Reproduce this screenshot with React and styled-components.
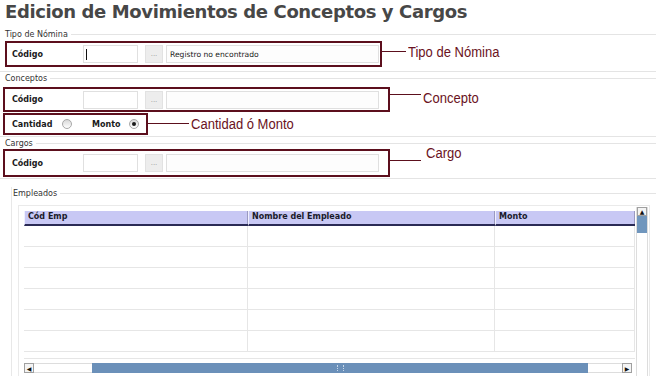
import styled, { createGlobalStyle } from "styled-components"

const Global = createGlobalStyle`
  body {
    margin: 0;
    background: #fff;
    font-family: "DejaVu Sans", Verdana, sans-serif;
    color: #222;
  }
`

const ROWS = 6

export default function App() {
    return (
        <Page>
            <Global />
            <Title>Edicion de Movimientos de Conceptos y Cargos</Title>

            <Section $pad={4}>
                <Legend><span>Tipo de Nómina</span></Legend>
                <Callout>
                    <Box $x={5} $w={377} $h={26} $top={1}>
                        <FieldRow>
                            <Label>Código</Label>
                            <CodeInput><Caret /></CodeInput>
                            <Dots>...</Dots>
                            <DescInput>Registro no encontrado</DescInput>
                        </FieldRow>
                    </Box>
                    <Leader $w={24} $lift={2} />
                    <Note $lift={2}>Tipo de Nómina</Note>
                </Callout>
            </Section>

            <Section $pad={1}>
                <Legend><span>Conceptos</span></Legend>
                <Callout>
                    <Box $x={3} $w={387} $h={25} $top={3}>
                        <FieldRow>
                            <Label>Código</Label>
                            <CodeInput />
                            <Dots>...</Dots>
                            <DescInput />
                        </FieldRow>
                    </Box>
                    <Leader $w={31} $lift={4} />
                    <Note $lift={0}>Concepto</Note>
                </Callout>
                <Callout>
                    <Box $x={3} $w={145} $h={22} $top={1}>
                        <FieldRow>
                            <RadioLabel>Cantidad</RadioLabel>
                            <Radio />
                            <RadioLabel $w={37}>Monto</RadioLabel>
                            <Radio $checked />
                        </FieldRow>
                    </Box>
                    <Leader $w={41} $lift={0} />
                    <Note $lift={0}>Cantidad ó Monto</Note>
                </Callout>
            </Section>

            <Section $pad={1}>
                <Legend><span>Cargos</span></Legend>
                <Callout>
                    <Box $x={3} $w={387} $h={28} $top={0}>
                        <FieldRow>
                            <Label>Código</Label>
                            <CodeInput />
                            <Dots>...</Dots>
                            <DescInput />
                        </FieldRow>
                    </Box>
                    <Leader $w={31} $lift={3} />
                    <Note $lift={10} $gap={5}>Cargo</Note>
                </Callout>
            </Section>

            <Empleados>
                <Legend $indent={-4}><span>Empleados</span></Legend>
                <Panel>
                    <GridWrap>
                        <Grid>
                            <HeadCell>Cód Emp</HeadCell>
                            <HeadCell>Nombre del Empleado</HeadCell>
                            <HeadCell>Monto</HeadCell>
                            {Array.from({ length: ROWS * 3 }).map((_, i) => (
                                <Cell key={i} />
                            ))}
                        </Grid>
                        <HScroll>
                            <Arrow>◀</Arrow>
                            <Track $w={58} />
                            <Thumb><Grip /></Thumb>
                            <Track $w={34} />
                            <Arrow>▶</Arrow>
                        </HScroll>
                    </GridWrap>
                    <VScroll>
                        <Arrow $v>▲</Arrow>
                        <VThumb />
                    </VScroll>
                </Panel>
            </Empleados>
        </Page>
    )
}

const Page = styled.div`
  width: 664px;
  height: 376px;
  overflow: hidden;
`
const Title = styled.h1`
  margin: 0;
  padding: 1px 0 0 5px;
  height: 27px;
  font-size: 18px;
  line-height: 22px;
  font-weight: bold;
  color: #474747;
  letter-spacing: -0.38px;
`
const Section = styled.div`
  width: 656px;
  padding-bottom: ${p => p.$pad}px;
  border-bottom: 1px solid #e4e4e4;
`
const Legend = styled.div`
  display: flex;
  align-items: center;
  height: 12px;
  padding-left: ${p => 5 + (p.$indent || 0)}px;
  font-size: 8px;
  color: #333;

  &::after {
    content: "";
    flex: 1;
    border-top: 1px solid #e4e4e4;
    margin: 1px 0 0 3px;
  }
`
const Callout = styled.div`
  display: flex;
  align-items: center;
`
const Box = styled.div`
  box-sizing: border-box;
  margin: ${p => p.$top}px 0 0 ${p => p.$x}px;
  width: ${p => p.$w}px;
  height: ${p => p.$h}px;
  padding-left: ${p => 10 - p.$x}px;
  border: 2px solid #5c0f1d;
  display: flex;
  align-items: center;
`
const Leader = styled.div`
  width: ${p => p.$w}px;
  border-top: 1px solid #5c0f1d;
  margin-bottom: ${p => p.$lift}px;
  margin-top: ${p => -p.$lift}px;
`
const Note = styled.span`
  margin-left: ${p => p.$gap ?? 2}px;
  margin-bottom: ${p => p.$lift}px;
  margin-top: ${p => -p.$lift}px;
  font-family: "Liberation Sans", Arial, sans-serif;
  font-size: 14px;
  color: #6a1222;
  display: inline-block;
  transform: scaleX(0.93);
  transform-origin: left center;
  white-space: nowrap;
`
const FieldRow = styled.div`
  display: flex;
  align-items: center;
`
const Label = styled.span`
  width: 71px;
  font-size: 8px;
  font-weight: bold;
  color: #1a1a1a;
`
const CodeInput = styled.div`
  box-sizing: border-box;
  width: 55px;
  height: 18px;
  border: 1px solid #e0e0e0;
  background: #fff;
  display: flex;
  align-items: center;
  padding-left: 2px;
`
const Caret = styled.span`
  width: 1px;
  height: 11px;
  background: #111;
`
const Dots = styled.div`
  box-sizing: border-box;
  width: 18px;
  height: 18px;
  margin-left: 7px;
  background: #ededed;
  border: 1px solid #e2e2e2;
  color: #999;
  font-size: 7px;
  display: flex;
  align-items: center;
  justify-content: center;
`
const DescInput = styled.div`
  box-sizing: border-box;
  width: 213px;
  height: 18px;
  margin-left: 3px;
  border: 1px solid #e0e0e0;
  background: #fdfdfd;
  font-size: 7.6px;
  color: #222;
  display: flex;
  align-items: center;
  padding-left: 3px;
`
const RadioLabel = styled.span`
  width: ${p => p.$w ?? 50}px;
  font-size: 8px;
  font-weight: bold;
  color: #1a1a1a;
`
const Radio = styled.span`
  box-sizing: border-box;
  width: 10px;
  height: 10px;
  border-radius: 50%;
  border: 1px solid #a8a8a8;
  background: linear-gradient(#d8d8d8, #fff);
  margin-right: 20px;
  display: flex;
  align-items: center;
  justify-content: center;

  &::after {
    content: "";
    width: 4px;
    height: 4px;
    border-radius: 50%;
    background: ${p => (p.$checked ? "#1a1a1a" : "transparent")};
  }
`
const Empleados = styled.div`
  margin: 8px 8px 0 11px;
  border-left: 1px solid #e8e8e8;
  height: 190px;
`
const Panel = styled.div`
  display: flex;
  margin: 6px 6px 0 6px;
  border-top: 1px solid #eaeaea;
  border-left: 1px solid #eaeaea;
  border-right: 1px solid #eaeaea;
  height: 180px;
`
const GridWrap = styled.div`
  flex: 1;
  padding: 5px 0 0 5px;
`
const Grid = styled.div`
  display: grid;
  grid-template-columns: 224px 247px 1fr;
  grid-auto-rows: 21px;
  grid-template-rows: 15px;
  border-bottom: 1px solid #e6e6e6;
  height: 147px;
  overflow: hidden;
`
const HeadCell = styled.div`
  background: #c8c8f4;
  border-bottom: 2px solid #2a2a55;
  border-left: 1px solid #f0f0ff;
  box-shadow: inset -1px 0 0 #9a9ac0;
  font-size: 8px;
  font-weight: bold;
  color: #1a1a2a;
  padding: 1px 0 0 3px;
  box-sizing: border-box;
`
const Cell = styled.div`
  border-bottom: 1px solid #e6e6e6;
  border-right: 1px solid #e6e6e6;
`
const HScroll = styled.div`
  display: flex;
  height: 10px;
  margin-top: 4px;
  margin-right: 3px;
`
const Arrow = styled.div`
  box-sizing: border-box;
  width: 10px;
  height: ${p => (p.$v ? 9 : 10)}px;
  border: 1px solid #a0a0a0;
  background: #f4f4f4;
  font-size: 6px;
  color: #111;
  display: flex;
  align-items: center;
  justify-content: center;
`
const Track = styled.div`
  width: ${p => p.$w}px;
  border-top: 1px solid #ddd;
  border-bottom: 1px solid #ddd;
  background: #fff;
`
const Thumb = styled.div`
  flex: 1;
  background: #6b90b9;
  display: flex;
  align-items: center;
  justify-content: center;
`
const Grip = styled.div`
  width: 5px;
  height: 6px;
  border-left: 1px dotted #c8d8ea;
  border-right: 1px dotted #c8d8ea;
`
const VScroll = styled.div`
  width: 10px;
  margin: 1px 1px 0 1px;
  border-left: 1px solid #ddd;
  border-right: 1px solid #ddd;
  display: flex;
  flex-direction: column;
`
const VThumb = styled.div`
  height: 17px;
  background: #7096bd;
`
